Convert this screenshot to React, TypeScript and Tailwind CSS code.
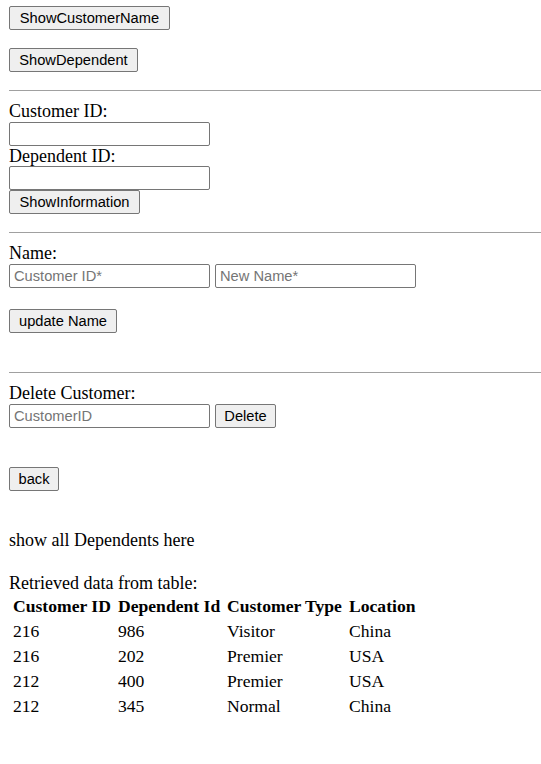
import React from "react";

const btn =
  "h-[24px] shrink-0 bg-[#efefef] border border-[#767676] rounded-[2px] font-['Liberation_Sans',Arial,sans-serif] text-[14.67px] leading-none text-black flex items-center justify-center";
const inp =
  "block h-[24px] w-[201px] shrink-0 bg-white border border-[#767676] rounded-[2px] pl-[4px] font-['Liberation_Sans',Arial,sans-serif] text-[14.67px] text-black placeholder:text-[#757575] outline-none";
const label = "leading-[21px] text-[18px]";
const hr = "h-px bg-[#a0a0a0] w-full";

const rows = [
  ["216", "986", "Visitor", "China"],
  ["216", "202", "Premier", "USA"],
  ["212", "400", "Premier", "USA"],
  ["212", "345", "Normal", "China"],
];

export default function App() {
  return (
    <div className="min-h-[764px] w-full bg-white pl-[9px] pt-[6px] font-['Liberation_Serif','Times_New_Roman',serif] text-[17.6px] text-black">
      <button className={`${btn} w-[161px]`}>ShowCustomerName</button>
      <button className={`${btn} w-[129px] mt-[18px]`}>ShowDependent</button>
      <div className={`${hr} mt-[18px]`} />

      <div className={`${label} mt-[10px]`}>Customer ID:</div>
      <input className={inp} />
      <div className="leading-[20px] text-[18px]">Dependent ID:</div>
      <input className={inp} />
      <button className={`${btn} w-[131px]`}>ShowInformation</button>

      <div className={`${hr} mt-[18px]`} />
      <div className={`${label} mt-[10px]`}>Name:</div>
      <div className="flex gap-[5px]">
        <input className={inp} placeholder="Customer ID*" />
        <input className={inp} placeholder="New Name*" />
      </div>
      <button className={`${btn} w-[108px] mt-[21px]`}>update Name</button>

      <div className={`${hr} mt-[39px]`} />
      <div className={`${label} mt-[10px]`}>Delete Customer:</div>
      <div className="flex gap-[5px]">
        <input className={inp} placeholder="CustomerID" />
        <button className={`${btn} w-[61px]`}>Delete</button>
      </div>

      <button className={`${btn} w-[50px] mt-[39px]`}>back</button>

      <div className={`${label} mt-[39px]`}>show all Dependents here</div>
      <div className={`${label} mt-[22px]`}>Retrieved data from table:</div>
      <div className="grid grid-cols-[105px_109px_122px_auto] pl-[4px] leading-[25px]">
        <div className="font-bold">Customer ID</div>
        <div className="font-bold">Dependent Id</div>
        <div className="font-bold">Customer Type</div>
        <div className="font-bold">Location</div>
        {rows.map((r, i) => (
          <React.Fragment key={i}>
            <div>{r[0]}</div>
            <div>{r[1]}</div>
            <div>{r[2]}</div>
            <div>{r[3]}</div>
          </React.Fragment>
        ))}
      </div>
    </div>
  );
}
